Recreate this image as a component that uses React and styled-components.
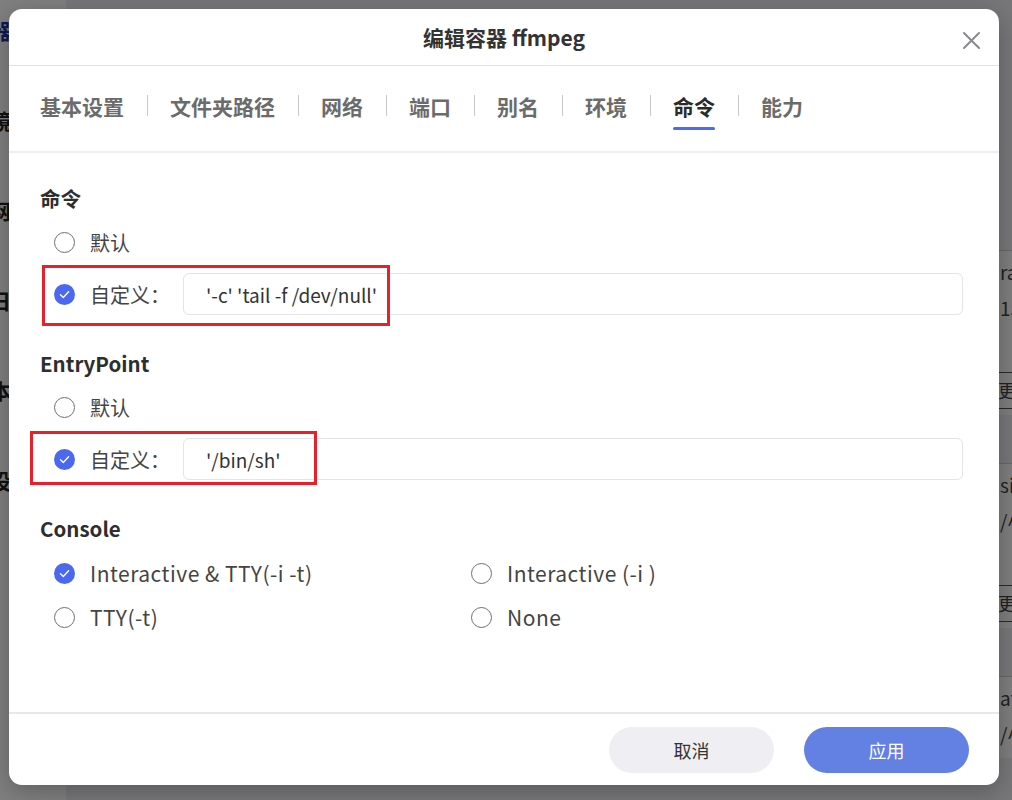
import React from 'react'
import styled, { createGlobalStyle } from 'styled-components'

const GlobalStyle = createGlobalStyle`
  html, body {
    margin: 0;
    padding: 0;
    background: #f0f1f4;
  }
  body {
    font-family: "Noto Sans CJK SC", "Noto Sans", sans-serif;
    color: #333;
  }
  * { box-sizing: border-box; }
`

/* ---------- page behind the dialog ---------- */

const Page = styled.div`
  position: relative;
  width: 1012px;
  height: 800px;
  display: flex;
  overflow: hidden;
  background: #eeeff2;
`

const Sidebar = styled.div`
  width: 66px;
  flex-shrink: 0;
  background: #ffffff;
  display: flex;
  flex-direction: column;
  padding-top: 18px;
  gap: 66px;

  > span {
    display: block;
    margin-left: -10px;
    font-size: 21px;
    line-height: 24px;
    font-weight: 700;
    color: #222;
  }

  > span.-active {
    color: #1f2fa8;
  }
`

const Main = styled.div`
  flex: 1;
  display: flex;
  justify-content: flex-end;
`

const CardList = styled.div`
  width: 130px;
  padding-top: 250px;
  display: flex;
  flex-direction: column;
  gap: 48px;
`

const Card = styled.div`
  background: #fdfdfd;
  border-top: 1px solid #cfcfcf;
  padding: 3px 0 6px 118px;
  color: #444;
  font-size: 19px;

  > .line {
    display: block;
    line-height: 36px;
    white-space: nowrap;
  }

  > .more {
    margin-top: 46px;
    margin-left: -118px;
    padding-left: 116px;
    height: 37px;
    line-height: 35px;
    border-top: 1px solid #555;
    border-bottom: 1px solid #555;
    font-size: 18px;
    white-space: nowrap;
  }
`

/* ---------- dialog ---------- */

const Overlay = styled.div`
  position: absolute;
  inset: 0;
  background: rgba(0, 0, 0, 0.5);
`

const Modal = styled.div`
  position: absolute;
  left: 9px;
  top: 9px;
  width: 990px;
  height: 776px;
  background: #fff;
  border-radius: 13px;
  box-shadow: 0 6px 24px rgba(0, 0, 0, 0.25);
  display: flex;
  flex-direction: column;
  overflow: hidden;
`

const Header = styled.div`
  position: relative;
  height: 57px;
  flex-shrink: 0;
  display: flex;
  align-items: center;
  justify-content: center;
  border-bottom: 1px solid #e2e2e4;

  > h1 {
    margin: 0;
    font-size: 21px;
    font-weight: 700;
    color: #333;
  }
`

const CloseButton = styled.button`
  position: absolute;
  right: 18px;
  top: 21px;
  width: 20px;
  height: 20px;
  padding: 0;
  border: none;
  background: transparent;
  color: #8a8a8e;
  cursor: pointer;
  display: flex;
  align-items: center;
  justify-content: center;
`

const TabBar = styled.div`
  height: 87px;
  flex-shrink: 0;
  display: flex;
  align-items: center;
  padding: 0 0 6px 31px;
  border-bottom: 2px solid #eeeef0;
`

const Tab = styled.div`
  position: relative;
  font-size: 21px;
  line-height: 30px;
  font-weight: 700;
  color: ${p => (p.$active ? '#2b2b2b' : '#6b6b6b')};
  cursor: pointer;

  &::after {
    content: '';
    display: ${p => (p.$active ? 'block' : 'none')};
    position: absolute;
    left: 0;
    right: 0;
    bottom: -9px;
    height: 3px;
    border-radius: 2px;
    background: #4a6bf2;
  }
`

const TabDivider = styled.span`
  width: 1px;
  height: 21px;
  margin: 0 22.5px;
  background: #c9c9cc;
`

const Body = styled.div`
  flex: 1;
  padding: 30px 36px 0 31px;
  display: flex;
  flex-direction: column;
`

const Section = styled.section`
  & + & {
    margin-top: 33px;
  }
`

const SectionTitle = styled.h2`
  margin: 0;
  height: 30px;
  line-height: 30px;
  font-size: 20.5px;
  font-weight: 700;
  color: #2e2e2e;
`

const Options = styled.div`
  margin-top: 9px;
  display: flex;
  flex-direction: column;
  gap: 11px;
`

const ConsoleGrid = styled.div`
  margin-top: 10px;
  display: grid;
  grid-template-columns: 417px 1fr;
  row-gap: 4px;
`

const OptionRow = styled.label`
  position: relative;
  display: flex;
  align-items: center;
  height: ${p => (p.$tall ? '42px' : '40px')};
  padding-left: 14px;
  cursor: pointer;
`

const RadioDot = styled.span`
  width: 21px;
  height: 21px;
  flex-shrink: 0;
  border-radius: 50%;
  border: ${p => (p.$checked ? 'none' : '1.5px solid #6f6f72')};
  background: ${p => (p.$checked ? '#4a69f0' : '#fff')};
  display: flex;
  align-items: center;
  justify-content: center;
  margin-right: 15px;
`

const OptionText = styled.span`
  font-size: ${p => (p.$latin ? '21px' : '20px')};
  letter-spacing: ${p => (p.$latin ? '0.5px' : '0')};
  color: #444;
  white-space: nowrap;
  width: ${p => (p.$width ? `${p.$width}px` : 'auto')};
  flex-shrink: 0;
`

const TextInput = styled.input`
  flex: 1;
  height: 42px;
  border: 1px solid #e3e3ea;
  border-radius: 6px;
  padding: 0 0 0 22px;
  font-family: "Noto Sans CJK SC", "Noto Sans", sans-serif;
  font-size: 19px;
  color: #333;
  background: #fff;
  outline: none;
`

const Highlight = styled.span`
  position: absolute;
  left: ${p => p.$left}px;
  top: ${p => p.$top}px;
  width: ${p => p.$w}px;
  height: ${p => p.$h}px;
  border: 3px solid #e8202b;
  pointer-events: none;
`

const Footer = styled.div`
  height: 73px;
  flex-shrink: 0;
  border-top: 2px solid #e8e8ea;
  display: flex;
  justify-content: flex-end;
  align-items: flex-start;
  gap: 30px;
  padding: 13px 30px 0 0;
`

const Button = styled.button`
  width: 165px;
  height: 46px;
  border: none;
  border-radius: 23px;
  font-family: "Noto Sans CJK SC", "Noto Sans", sans-serif;
  font-size: 18px;
  cursor: pointer;
  background: ${p => (p.$primary ? '#6380e3' : '#efeff3')};
  color: ${p => (p.$primary ? '#fff' : '#333')};
`

function Radio ({ checked }) {
  return (
    <RadioDot $checked={checked}>
      {checked && (
        <svg width='13' height='13' viewBox='0 0 13 13' fill='none'>
          <path d='M2.5 6.8 L5.3 9.4 L10.6 3.8' stroke='#fff' strokeWidth='1.4' strokeLinecap='round' strokeLinejoin='round' />
        </svg>
      )}
    </RadioDot>
  )
}

const tabs = ['基本设置', '文件夹路径', '网络', '端口', '别名', '环境', '命令', '能力']

const consoleOptions = [
  { label: 'Interactive & TTY(-i -t)', checked: true },
  { label: 'Interactive (-i )' },
  { label: 'TTY(-t)' },
  { label: 'None' }
]

function CommandSection ({ title, value, box }) {
  return (
    <Section>
      <SectionTitle>{title}</SectionTitle>
      <Options>
        <OptionRow>
          <Radio />
          <OptionText>默认</OptionText>
        </OptionRow>
        <OptionRow $tall>
          <Highlight $left={box.left} $top={box.top} $w={box.w} $h={box.h} />
          <Radio checked />
          <OptionText $width={93}>自定义：</OptionText>
          <TextInput defaultValue={value} />
        </OptionRow>
      </Options>
    </Section>
  )
}

export default function App () {
  return (
    <>
      <GlobalStyle />
      <Page>
        <Sidebar>
          <span className='-active'>器</span>
          <span>镜</span>
          <span>网</span>
          <span>日</span>
          <span>本</span>
          <span>设</span>
        </Sidebar>
        <Main>
          <CardList>
            <Card>
              <span className='line'>ra</span>
              <span className='line'>15</span>
              <div className='more'>更多</div>
            </Card>
            <Card>
              <span className='line'>sic</span>
              <span className='line'>/小</span>
              <div className='more'>更多</div>
            </Card>
            <Card>
              <span className='line'>at</span>
              <span className='line'>/小</span>
            </Card>
          </CardList>
        </Main>

        <Overlay />

        <Modal>
          <Header>
            <h1>编辑容器 ffmpeg</h1>
            <CloseButton aria-label='关闭'>
              <svg width='19' height='19' viewBox='0 0 19 19' fill='none'>
                <path d='M2 2 L17 17 M17 2 L2 17' stroke='currentColor' strokeWidth='2' strokeLinecap='round' />
              </svg>
            </CloseButton>
          </Header>

          <TabBar>
            {tabs.map((t, i) => (
              <React.Fragment key={t}>
                {i > 0 && <TabDivider />}
                <Tab $active={t === '命令'}>{t}</Tab>
              </React.Fragment>
            ))}
          </TabBar>

          <Body>
            <CommandSection
              title='命令'
              value={"'-c' 'tail -f /dev/null'"}
              box={{ left: 2, top: -8, w: 348, h: 61 }}
            />
            <CommandSection
              title='EntryPoint'
              value={"'/bin/sh'"}
              box={{ left: -10, top: -7, w: 287, h: 54 }}
            />
            <Section>
              <SectionTitle>Console</SectionTitle>
              <ConsoleGrid>
                {consoleOptions.map(o => (
                  <OptionRow key={o.label}>
                    <Radio checked={o.checked} />
                    <OptionText $latin>{o.label}</OptionText>
                  </OptionRow>
                ))}
              </ConsoleGrid>
            </Section>
          </Body>

          <Footer>
            <Button>取消</Button>
            <Button $primary>应用</Button>
          </Footer>
        </Modal>
      </Page>
    </>
  )
}
